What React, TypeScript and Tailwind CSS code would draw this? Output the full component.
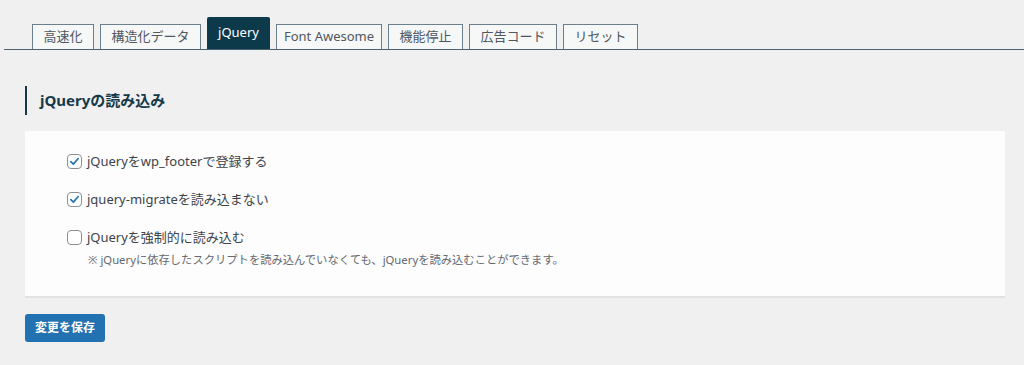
import { useState } from 'react';

const tabs = ['高速化', '構造化データ', 'jQuery', 'Font Awesome', '機能停止', '広告コード', 'リセット'];

const font = { fontFamily: '"Noto Sans", "Noto Sans CJK JP", sans-serif' };

function Check({ checked, onClick }: { checked: boolean; onClick: () => void }) {
  return (
    <button
      type="button"
      onClick={onClick}
      className="flex h-[15px] w-[15px] shrink-0 items-center justify-center rounded-[4px] border border-[#8c8f94] bg-white"
    >
      {checked && (
        <svg viewBox="0 0 16 16" className="h-[13px] w-[13px]">
          <path d="M3.5 8.2 L6.6 11.2 L12.6 4.4" fill="none" stroke="#2271b1" strokeWidth="2" strokeLinecap="round" strokeLinejoin="round" />
        </svg>
      )}
    </button>
  );
}

export default function App() {
  const [opts, setOpts] = useState([true, true, false]);
  const toggle = (i: number) => setOpts(opts.map((v, j) => (j === i ? !v : v)));

  const rows = ['jQueryをwp_footerで登録する', 'jquery-migrateを読み込まない', 'jQueryを強制的に読み込む'];

  return (
    <div style={font} className="h-[365px] w-full overflow-hidden bg-[#f0f0f1] text-[#3c434a]">
      <div className="ml-[4px] mt-[17px] flex items-end gap-[6px] border-b border-[#4a6272] pl-[28px]">
        {tabs.map((t) =>
          t === 'jQuery' ? (
            <div key={t} className="flex h-[32px] items-center rounded-t-[2px] bg-[#0d3a4b] px-[11px] text-[13px] text-white">
              {t}
            </div>
          ) : (
            <div
              key={t}
              className={
                'flex h-[25px] items-center border border-b-0 border-[#6b7f8c] bg-[#f6f7f7] text-[13px] text-[#50575e] ' +
                (t === 'Font Awesome' ? 'px-[7px]' : 'px-[10.5px]')
              }
            >
              {t}
            </div>
          )
        )}
      </div>

      <div className="pl-[25px] pr-[19px]">
        <h2 className="mt-[36px] border-l-2 border-[#16394a] py-[4px] pl-[13px] text-[15px] font-bold leading-[21px] text-[#16394a]">
          jQueryの読み込み
        </h2>

        <div className="mt-[16px] border-b-2 border-[#e2e2e3] bg-[#fdfdfd] pb-[28px] pl-[42px] pt-[22px]">
          <div className="flex flex-col gap-[22px]">
            {rows.map((r, i) => (
              <div key={r}>
                <label className="flex items-center gap-[5px] text-[13px] leading-[16px]">
                  <Check checked={opts[i]} onClick={() => toggle(i)} />
                  <span>{r}</span>
                </label>
                {i === 2 && (
                  <p className="mt-[7px] pl-[21px] text-[11.3px] leading-[16px] text-[#646970]">
                    ※ jQueryに依存したスクリプトを読み込んでいなくても、jQueryを読み込むことができます。
                  </p>
                )}
              </div>
            ))}
          </div>
        </div>

        <button className="mt-[16px] flex h-[28px] w-[80px] items-center justify-center rounded-[3px] bg-[#2271b1] text-[12px] font-bold text-white">
          変更を保存
        </button>
      </div>
    </div>
  );
}
